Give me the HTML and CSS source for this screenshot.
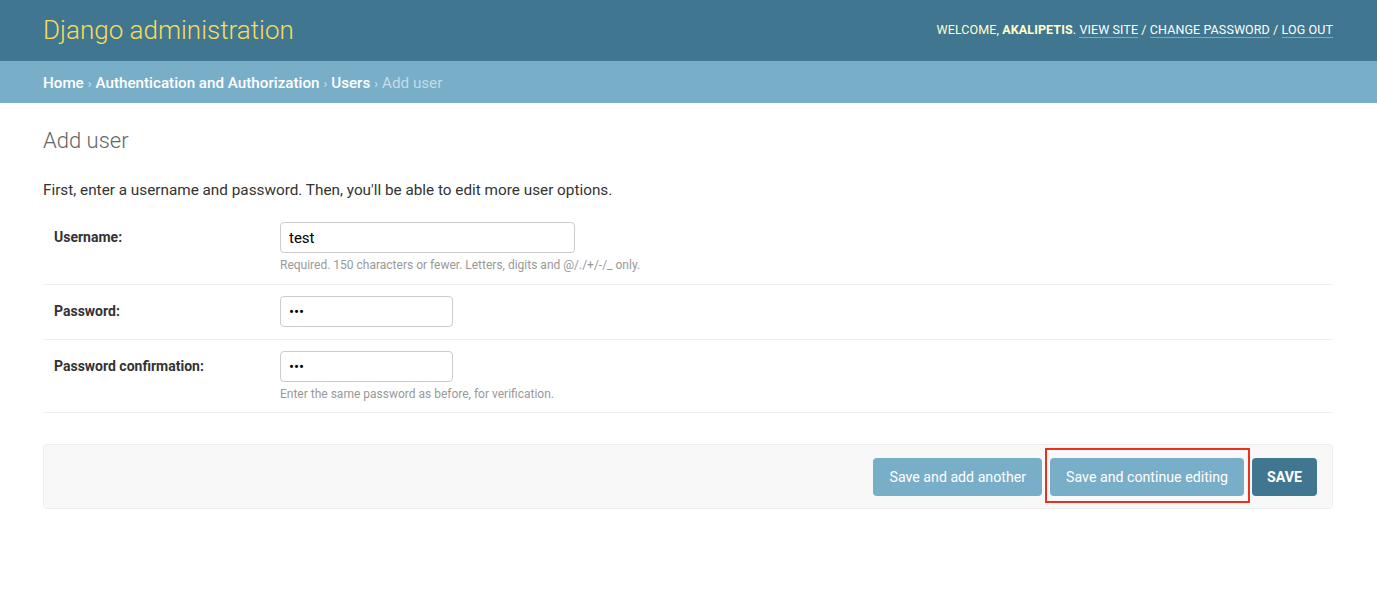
FILE: index.html
```html
<!DOCTYPE html>
<html lang="en">
<head>
  <meta charset="UTF-8">
  <title>Add user | Django site admin</title>
  <link rel="stylesheet" href="styles.css">
</head>
<body>
  <div id="header">
    <div id="branding">
      <h1 id="site-name"><a href="#">Django administration</a></h1>
    </div>
    <div id="user-tools">
      Welcome, <strong>akalipetis</strong>.
      <a href="#">View site</a> /
      <a href="#">Change password</a> /
      <a href="#">Log out</a>
    </div>
  </div>

  <div class="breadcrumbs">
    <a href="#">Home</a> <span class="sep">›</span>
    <a href="#">Authentication and Authorization</a> <span class="sep">›</span>
    <a href="#">Users</a> <span class="sep">›</span>
    Add user
  </div>

  <div id="content">
    <h1 class="page-title">Add user</h1>
    <p class="intro">First, enter a username and password. Then, you'll be able to edit more user options.</p>

    <form>
      <fieldset class="module">
        <div class="form-row">
          <label for="id_username">Username:</label>
          <div class="field">
            <input type="text" id="id_username" class="wide" value="test">
            <div class="help">Required. 150 characters or fewer. Letters, digits and @/./+/-/_ only.</div>
          </div>
        </div>
        <div class="form-row">
          <label for="id_password1">Password:</label>
          <div class="field">
            <input type="password" id="id_password1" value="abc">
          </div>
        </div>
        <div class="form-row">
          <label for="id_password2">Password confirmation:</label>
          <div class="field">
            <input type="password" id="id_password2" value="abc">
            <div class="help">Enter the same password as before, for verification.</div>
          </div>
        </div>
      </fieldset>

      <div class="submit-row">
        <button type="button" class="btn">Save and add another</button>
        <span class="highlight">
          <button type="button" class="btn">Save and continue editing</button>
        </span>
        <button type="button" class="btn default">SAVE</button>
      </div>
    </form>
  </div>
</body>
</html>
```

FILE: styles.css
```css
* {
  margin: 0;
  padding: 0;
  box-sizing: border-box;
}

body {
  font-family: Roboto, "Liberation Sans", sans-serif;
  color: #333;
  background: #fff;
  font-size: 15px;
}

a {
  color: inherit;
  text-decoration: none;
}

/* header */

#header {
  height: 61px;
  background: #417690;
  display: flex;
  align-items: center;
  justify-content: space-between;
  padding: 0 44px 2px 43px;
}

#site-name {
  font-size: 26px;
  font-weight: 300;
  color: #f5dd5d;
}

#user-tools {
  font-size: 12.5px;
  color: #ffc;
  text-transform: uppercase;
  letter-spacing: 0.1px;
}

#user-tools strong {
  font-weight: 700;
}

#user-tools a {
  color: #fff;
  border-bottom: 1px solid rgba(255, 255, 255, 0.35);
}

.breadcrumbs {
  height: 42px;
  background: #79aec8;
  color: #c4dce8;
  font-size: 15.2px;
  display: flex;
  align-items: center;
  gap: 4px;
  padding: 2px 43px 0;
}

.breadcrumbs a {
  color: #fff;
  font-weight: 500;
}

.breadcrumbs .sep {
  color: #d0e4ee;
  font-size: 12.5px;
}

/* content */

#content {
  padding: 25px 44px 0 43px;
}

.page-title {
  font-size: 22px;
  font-weight: 300;
  color: #666;
  margin-bottom: 28px;
}

.intro {
  font-size: 15.3px;
  color: #333;
  margin-bottom: 23px;
}

fieldset {
  border: none;
}

.form-row {
  display: grid;
  grid-template-columns: 226px 1fr;
  padding: 11px 11px 12px;
  border-bottom: 1px solid #eee;
}

.form-row:first-child {
  padding-top: 0;
}

.form-row:last-child {
  padding-bottom: 11px;
}

.form-row label {
  font-weight: 700;
  font-size: 14px;
  color: #333;
  line-height: 31px;
}

.field input {
  display: block;
  height: 31px;
  width: 173px;
  border: 1px solid #ccc;
  border-radius: 4px;
  padding: 5px 8px;
  font-family: Roboto, "Liberation Sans", sans-serif;
  font-size: 15px;
  color: #000;
}

.field input.wide {
  width: 295px;
}

.help {
  font-size: 12px;
  color: #999;
  margin-top: 5px;
}

/* submit row */

.submit-row {
  margin-top: 31px;
  background: #f8f8f8;
  border: 1px solid #eee;
  border-radius: 4px;
  padding: 13px 15px 12px;
  display: flex;
  justify-content: flex-end;
  gap: 8px;
}

.btn {
  height: 38px;
  padding: 0 16px;
  border: none;
  border-radius: 4px;
  background: #79aec8;
  color: #fff;
  font-family: Roboto, "Liberation Sans", sans-serif;
  font-size: 14.2px;
  cursor: pointer;
}

.btn.default {
  background: #417690;
  font-weight: 700;
  padding: 0 15px;
}

.highlight {
  position: relative;
  display: flex;
}

.highlight::after {
  content: "";
  position: absolute;
  top: -10px;
  bottom: -7px;
  left: -5px;
  right: -6px;
  border: 2px solid #e8321e;
}
```
